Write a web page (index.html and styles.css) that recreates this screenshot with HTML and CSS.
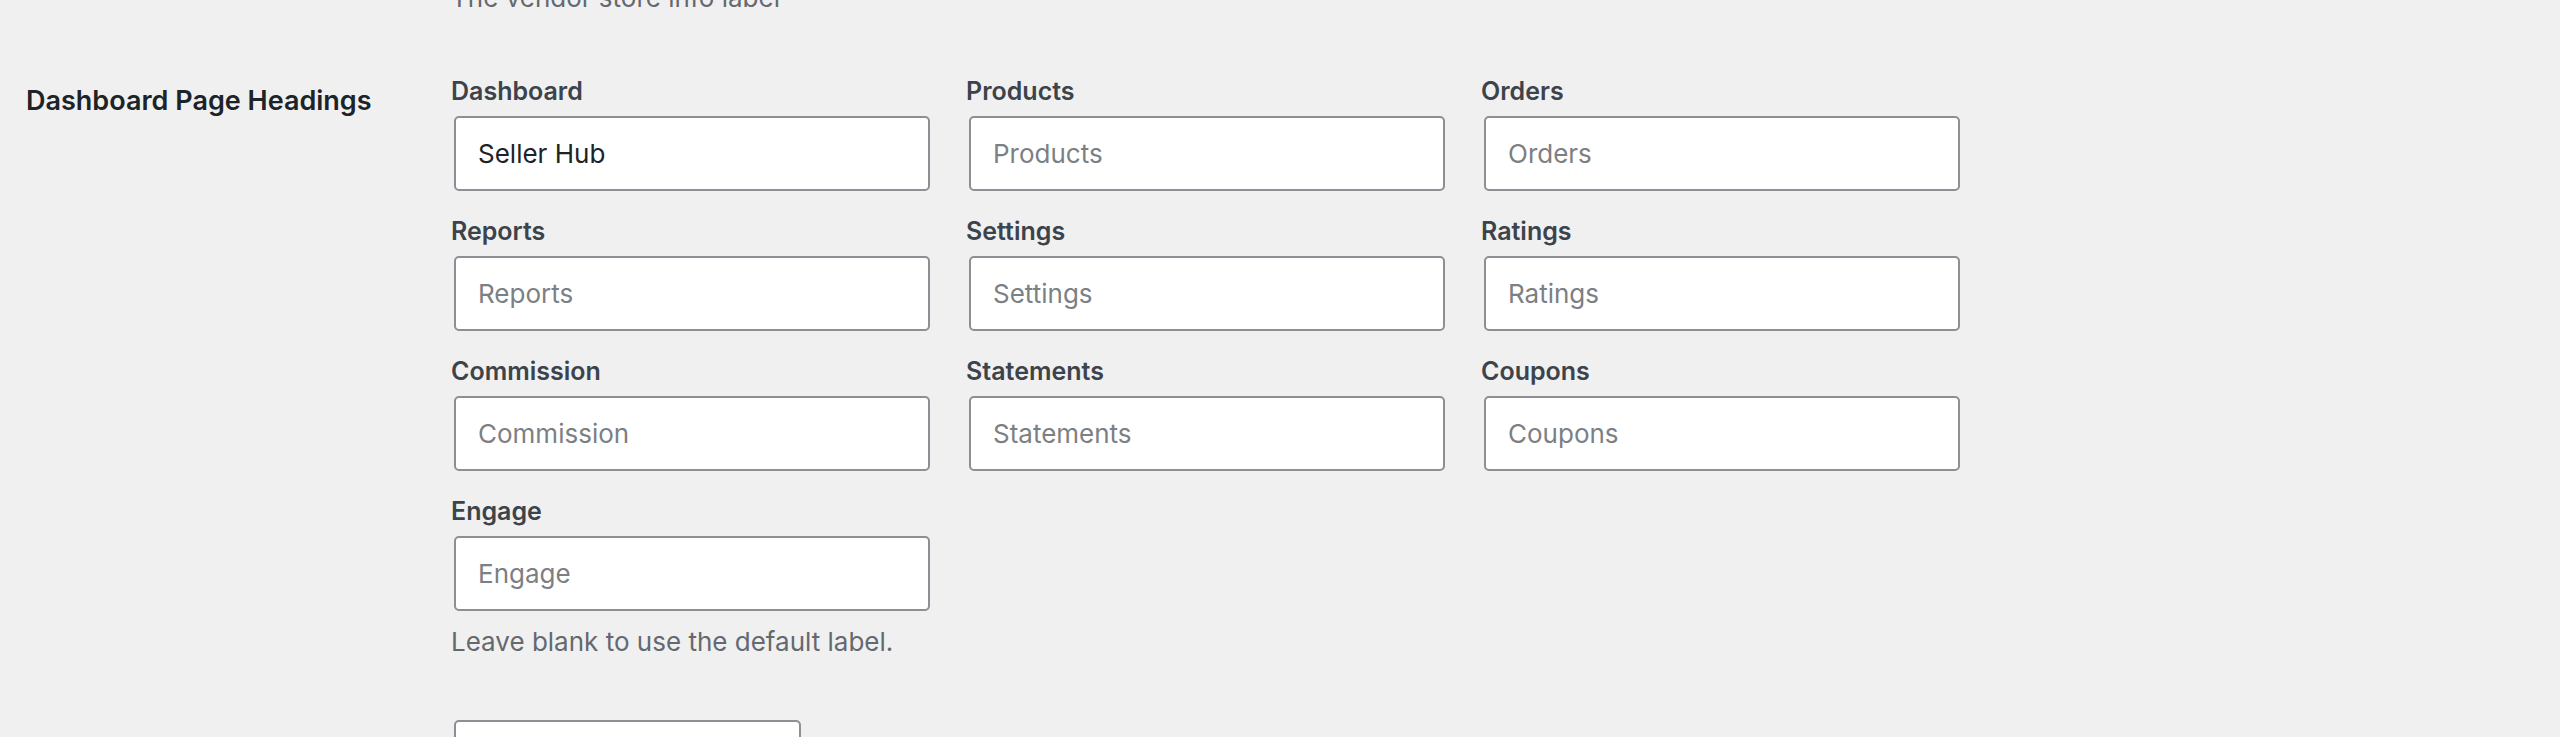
FILE: index.html
```html
<!DOCTYPE html>
<html>
<head>
  <link rel="stylesheet" href="styles.css">
</head>
<body>
  <div class="wrap">
    <div class="form-row note-row">
      <div class="th"></div>
      <div class="td">
        <p class="description">The vendor store info label</p>
      </div>
    </div>

    <div class="form-row headings-row">
      <div class="th">Dashboard Page Headings</div>
      <div class="td">
        <div class="heading-grid">
          <div class="field">
            <label for="h-dashboard">Dashboard</label>
            <input type="text" id="h-dashboard" value="Seller Hub" placeholder="Dashboard">
          </div>
          <div class="field">
            <label for="h-products">Products</label>
            <input type="text" id="h-products" placeholder="Products">
          </div>
          <div class="field">
            <label for="h-orders">Orders</label>
            <input type="text" id="h-orders" placeholder="Orders">
          </div>
          <div class="field">
            <label for="h-reports">Reports</label>
            <input type="text" id="h-reports" placeholder="Reports">
          </div>
          <div class="field">
            <label for="h-settings">Settings</label>
            <input type="text" id="h-settings" placeholder="Settings">
          </div>
          <div class="field">
            <label for="h-ratings">Ratings</label>
            <input type="text" id="h-ratings" placeholder="Ratings">
          </div>
          <div class="field">
            <label for="h-commission">Commission</label>
            <input type="text" id="h-commission" placeholder="Commission">
          </div>
          <div class="field">
            <label for="h-statements">Statements</label>
            <input type="text" id="h-statements" placeholder="Statements">
          </div>
          <div class="field">
            <label for="h-coupons">Coupons</label>
            <input type="text" id="h-coupons" placeholder="Coupons">
          </div>
          <div class="field">
            <label for="h-engage">Engage</label>
            <input type="text" id="h-engage" placeholder="Engage">
          </div>
        </div>
        <p class="description help">Leave blank to use the default label.</p>
        <button class="button" type="button" aria-label="Save Changes"></button>
      </div>
    </div>
  </div>
</body>
</html>
```

FILE: styles.css
```css
body {
  margin: 0;
  background: #f0f0f1;
  color: #3c434a;
  font-family: Inter, "Noto Sans", sans-serif;
  font-size: 26px;
}

.form-row {
  display: flex;
}

.form-row .th {
  width: 451px;
  flex-shrink: 0;
  box-sizing: border-box;
  padding: 10px 0 0 26px;
  color: #1d2327;
  font-size: 27px;
  font-weight: 600;
  line-height: 36px;
}

.form-row .td {
  flex: 1;
}

.description {
  margin: 0;
  color: #646970;
  font-size: 26px;
  line-height: 36px;
}

.note-row {
  margin-top: -20px;
}

.headings-row {
  margin-top: 57px;
}

.heading-grid {
  display: grid;
  grid-template-columns: repeat(3, 479px);
  column-gap: 36px;
  row-gap: 22px;
}

.field label {
  display: block;
  margin-bottom: 7px;
  color: #3c434a;
  font-size: 25px;
  font-weight: 600;
  line-height: 36px;
}

.field input {
  display: block;
  box-sizing: border-box;
  width: 476px;
  height: 75px;
  margin: 0 0 0 3px;
  padding: 0 22px;
  border: 2px solid #8c8f94;
  border-radius: 5px;
  background: #ffffff;
  color: #1d2327;
  font-family: inherit;
  font-size: 26px;
  outline: 0;
}

.field input::placeholder {
  color: #7c7f84;
}

.help {
  margin-top: 13px;
}

.button {
  display: block;
  box-sizing: border-box;
  width: 347px;
  height: 76px;
  margin: 60px 0 0 3px;
  padding: 0;
  border: 2px solid #8c8f94;
  border-radius: 5px;
  background: #ffffff;
}
```
